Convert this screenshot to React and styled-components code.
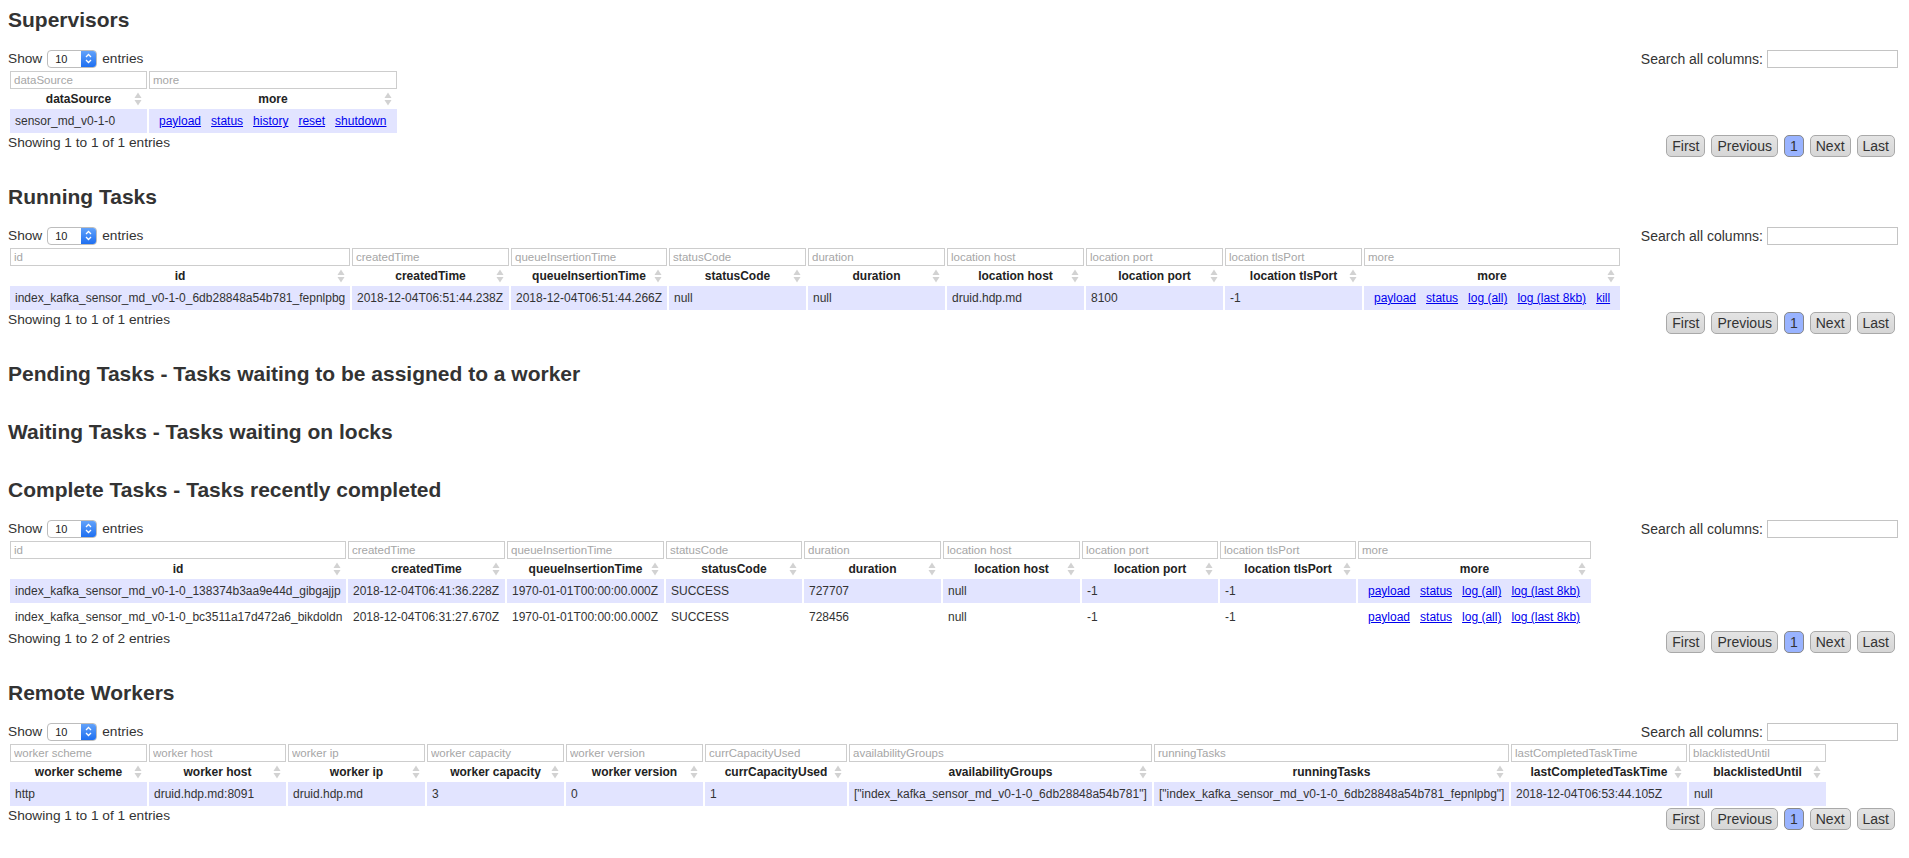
import { styled, createGlobalStyle } from "styled-components";

const GlobalStyle = createGlobalStyle`
  * {
    box-sizing: border-box;
  }
  body {
    margin: 0;
    background: #fff;
    color: #333;
    font-family: "Liberation Sans", Arial, Helvetica, sans-serif;
  }
`;

const Page = styled.div`
  display: flex;
  flex-direction: column;
  gap: 34px;
  padding: 8px 11px 8px 8px;
`;
const Section = styled.section`
  display: flex;
  flex-direction: column;
`;
const Title = styled.h2`
  margin: 0;
  font-size: 21px;
  line-height: 24px;
  font-weight: 700;
  color: #333;
`;
const Controls = styled.div`
  height: 21px;
  margin-top: 16px;

  display: flex;
  justify-content: space-between;
  align-items: center;

  font-size: 13.7px;
`;
const Length = styled.div`
  display: flex;
  align-items: center;
  gap: 5px;
`;
const SelectBox = styled.span`
  width: 50px;
  height: 18px;

  display: inline-flex;
  align-items: center;
  overflow: hidden;

  border: 1px solid #bdbdbd;
  border-radius: 4px;
  background: #fff;

  font-size: 11px;
  color: #222;
`;
const SelectValue = styled.span`
  flex-grow: 1;
  padding-left: 7px;
`;
const Stepper = styled.span`
  width: 15px;
  height: 100%;

  display: flex;
  align-items: center;
  justify-content: center;

  background: linear-gradient(#62a2fa, #1e6ff1);
`;
const Search = styled.div`
  display: flex;
  align-items: center;
  gap: 4px;
  font-size: 14px;
`;
const SearchInput = styled.input`
  width: 131px;
  height: 18px;
  padding: 0 3px;
  border: 1px solid #c4c4c4;
  outline: none;
`;
const Table = styled.table`
  width: ${({ $width }) => $width}px;
  table-layout: fixed;
  border-collapse: separate;
  border-spacing: 2px;

  font-size: 12px;
  color: #333;
`;
const Col = styled.col`
  width: ${({ $w }) => $w}px;
`;
const FilterCell = styled.th`
  height: 18px;
  padding: 0;
`;
const FilterInput = styled.input`
  display: block;
  width: 100%;
  height: 18px;
  padding: 0 3px;

  border: 1px solid #cdcdcd;
  outline: none;

  font-family: inherit;
  font-size: 11.5px;
  color: #333;

  &::placeholder {
    color: #a6a6a6;
  }
`;
const HeadCell = styled.th`
  height: 16px;
  padding: 0 5px;
`;
const HeadInner = styled.div`
  display: grid;
  grid-template-columns: 8px 1fr 8px;
  align-items: center;

  font-weight: 700;
  line-height: 16px;
  color: #222;
`;
const HeadLabel = styled.span`
  text-align: center;
  white-space: nowrap;
`;
const Row = styled.tr`
  background: ${({ $odd }) => ($odd ? "#e2e4ff" : "transparent")};
`;
const Cell = styled.td`
  padding: 5px;
  line-height: 14px;
  white-space: nowrap;
  overflow: hidden;
`;
const Link = styled.a`
  margin: 0 5px;
  color: #0000ee;
  text-decoration: underline;
  cursor: pointer;
`;
const Footer = styled.div`
  height: 16px;

  display: flex;
  justify-content: space-between;
  align-items: flex-start;

  font-size: 13.7px;
  line-height: 16px;
`;
const Pager = styled.div`
  display: flex;
  margin-right: 0;
`;
const PageButton = styled.span`
  margin: 0 3px;
  padding: 2px 5px;

  border: 1px solid ${({ $active }) => ($active ? "#888" : "#a9a9a9")};
  border-radius: 5px;
  background: ${({ $active }) =>
    $active ? "#99b3ff" : "linear-gradient(#e4e4e4, #d6d6d6)"};

  font-size: 14px;
  line-height: 16px;
  color: #333;
  cursor: pointer;
`;

const SortIcon = () => (
  <svg width="8" height="14" viewBox="0 0 8 14">
    <polygon points="4,0.5 7.5,6 0.5,6" fill="#d2d2d2" />
    <polygon points="0.5,8 7.5,8 4,13.5" fill="#d2d2d2" />
  </svg>
);

const Chevrons = () => (
  <svg width="7" height="11" viewBox="0 0 7 11">
    <polyline points="1,4 3.5,1.5 6,4" fill="none" stroke="#fff" strokeWidth="1.3" />
    <polyline points="1,7 3.5,9.5 6,7" fill="none" stroke="#fff" strokeWidth="1.3" />
  </svg>
);

const links = (names) => ({ links: names });

const sections = [
  {
    title: "Supervisors",
    table: {
      cols: [
        ["dataSource", 137],
        ["more", 248],
      ],
      rows: [["sensor_md_v0-1-0", links(["payload", "status", "history", "reset", "shutdown"])]],
      info: "Showing 1 to 1 of 1 entries",
    },
  },
  {
    title: "Running Tasks",
    table: {
      cols: [
        ["id", 340],
        ["createdTime", 157],
        ["queueInsertionTime", 156],
        ["statusCode", 137],
        ["duration", 137],
        ["location host", 137],
        ["location port", 137],
        ["location tlsPort", 137],
        ["more", 256],
      ],
      rows: [
        [
          "index_kafka_sensor_md_v0-1-0_6db28848a54b781_fepnlpbg",
          "2018-12-04T06:51:44.238Z",
          "2018-12-04T06:51:44.266Z",
          "null",
          "null",
          "druid.hdp.md",
          "8100",
          "-1",
          links(["payload", "status", "log (all)", "log (last 8kb)", "kill"]),
        ],
      ],
      info: "Showing 1 to 1 of 1 entries",
    },
  },
  { title: "Pending Tasks - Tasks waiting to be assigned to a worker" },
  { title: "Waiting Tasks - Tasks waiting on locks" },
  {
    title: "Complete Tasks - Tasks recently completed",
    table: {
      cols: [
        ["id", 336],
        ["createdTime", 157],
        ["queueInsertionTime", 157],
        ["statusCode", 136],
        ["duration", 137],
        ["location host", 137],
        ["location port", 136],
        ["location tlsPort", 136],
        ["more", 233],
      ],
      rows: [
        [
          "index_kafka_sensor_md_v0-1-0_138374b3aa9e44d_gibgajjp",
          "2018-12-04T06:41:36.228Z",
          "1970-01-01T00:00:00.000Z",
          "SUCCESS",
          "727707",
          "null",
          "-1",
          "-1",
          links(["payload", "status", "log (all)", "log (last 8kb)"]),
        ],
        [
          "index_kafka_sensor_md_v0-1-0_bc3511a17d472a6_bikdoldn",
          "2018-12-04T06:31:27.670Z",
          "1970-01-01T00:00:00.000Z",
          "SUCCESS",
          "728456",
          "null",
          "-1",
          "-1",
          links(["payload", "status", "log (all)", "log (last 8kb)"]),
        ],
      ],
      info: "Showing 1 to 2 of 2 entries",
    },
  },
  {
    title: "Remote Workers",
    table: {
      cols: [
        ["worker scheme", 137],
        ["worker host", 137],
        ["worker ip", 137],
        ["worker capacity", 137],
        ["worker version", 137],
        ["currCapacityUsed", 142],
        ["availabilityGroups", 303],
        ["runningTasks", 355],
        ["lastCompletedTaskTime", 176],
        ["blacklistedUntil", 137],
      ],
      rows: [
        [
          "http",
          "druid.hdp.md:8091",
          "druid.hdp.md",
          "3",
          "0",
          "1",
          '["index_kafka_sensor_md_v0-1-0_6db28848a54b781"]',
          '["index_kafka_sensor_md_v0-1-0_6db28848a54b781_fepnlpbg"]',
          "2018-12-04T06:53:44.105Z",
          "null",
        ],
      ],
      info: "Showing 1 to 1 of 1 entries",
    },
  },
];

const DataTable = ({ cols, rows, info }) => {
  const width = cols.reduce((sum, [, w]) => sum + w, 0) + (cols.length + 1) * 2;
  return (
    <>
      <Controls>
        <Length>
          Show
          <SelectBox>
            <SelectValue>10</SelectValue>
            <Stepper>
              <Chevrons />
            </Stepper>
          </SelectBox>
          entries
        </Length>
        <Search>
          Search all columns:
          <SearchInput type="text" />
        </Search>
      </Controls>
      <Table $width={width}>
        <colgroup>
          {cols.map(([name, w]) => (
            <Col key={name} $w={w} />
          ))}
        </colgroup>
        <thead>
          <tr>
            {cols.map(([name]) => (
              <FilterCell key={name}>
                <FilterInput type="text" placeholder={name} />
              </FilterCell>
            ))}
          </tr>
          <tr>
            {cols.map(([name]) => (
              <HeadCell key={name}>
                <HeadInner>
                  <span />
                  <HeadLabel>{name}</HeadLabel>
                  <SortIcon />
                </HeadInner>
              </HeadCell>
            ))}
          </tr>
        </thead>
        <tbody>
          {rows.map((row, i) => (
            <Row key={i} $odd={i % 2 === 0}>
              {row.map((value, j) => (
                <Cell key={j}>
                  {typeof value === "string"
                    ? value
                    : value.links.map((l) => <Link key={l}>{l}</Link>)}
                </Cell>
              ))}
            </Row>
          ))}
        </tbody>
      </Table>
      <Footer>
        <span>{info}</span>
        <Pager>
          <PageButton>First</PageButton>
          <PageButton>Previous</PageButton>
          <PageButton $active>1</PageButton>
          <PageButton>Next</PageButton>
          <PageButton>Last</PageButton>
        </Pager>
      </Footer>
    </>
  );
};

const App = () => {
  return (
    <>
      <GlobalStyle />
      <Page>
        {sections.map((s) => (
          <Section key={s.title}>
            <Title>{s.title}</Title>
            {s.table && <DataTable {...s.table} />}
          </Section>
        ))}
      </Page>
    </>
  );
};

export default App;
